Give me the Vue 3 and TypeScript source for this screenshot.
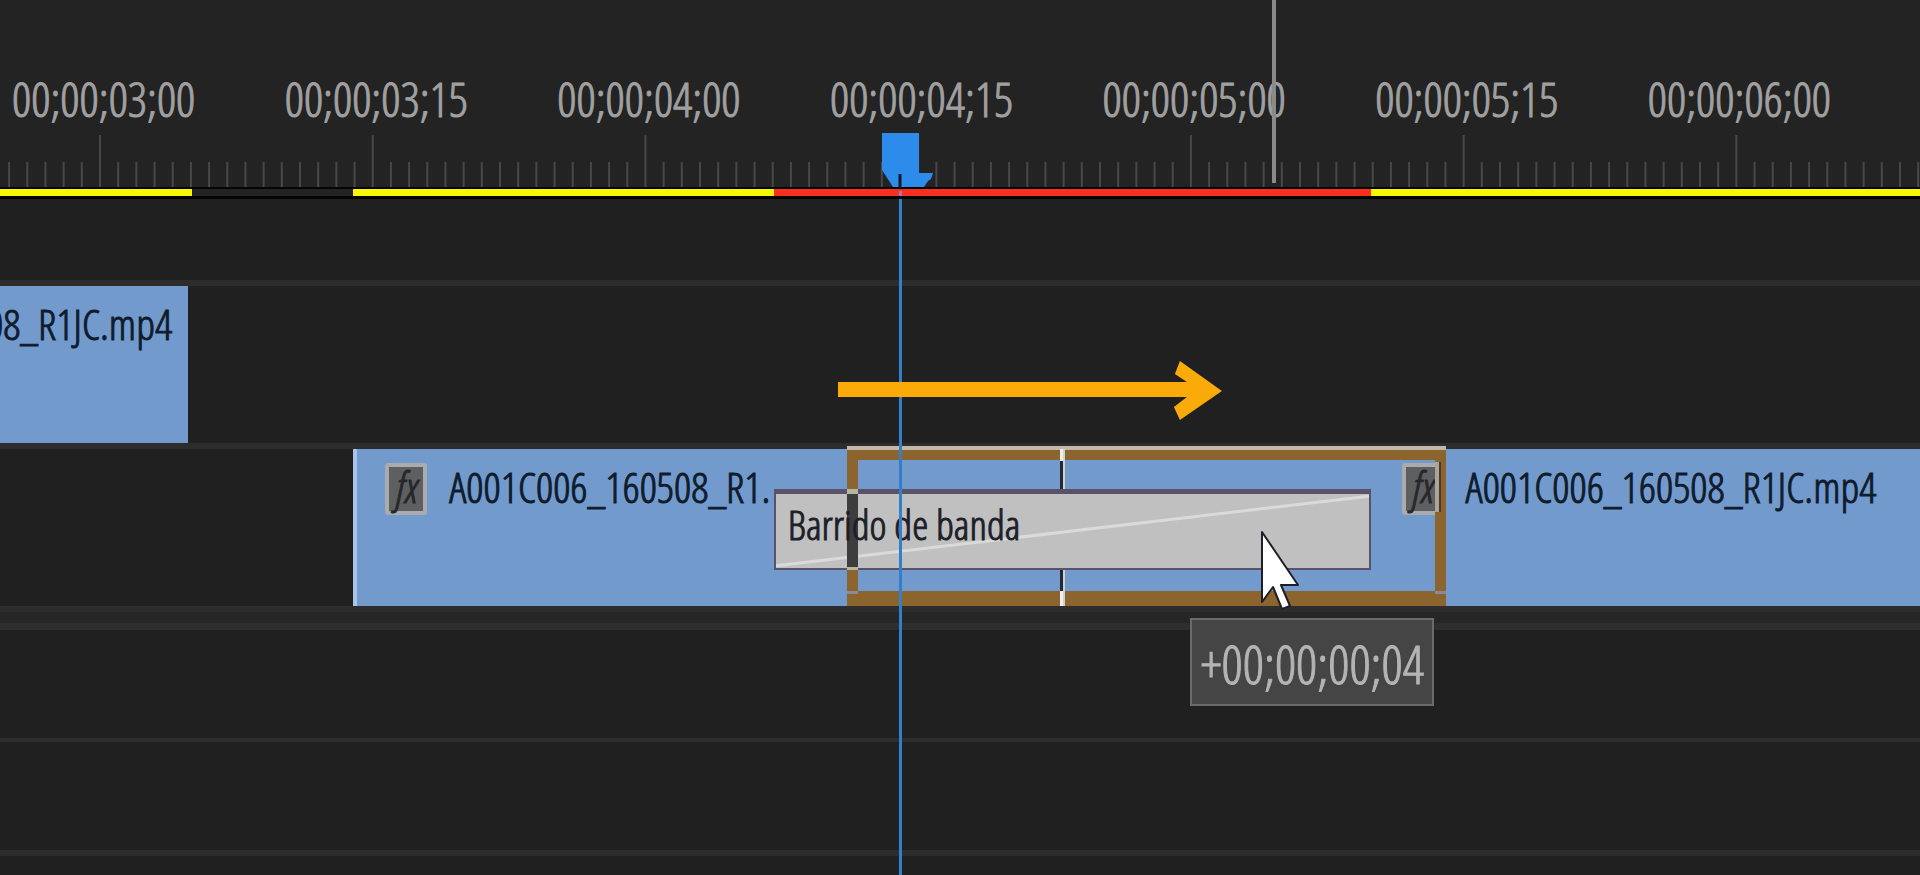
<script setup lang="ts">
interface Tick {
  frame: number
  major: boolean
}

const visibleFrames = 105.6
const firstMajor = 5.5
const labels: string[] = [
  '00;00;03;00',
  '00;00;03;15',
  '00;00;04;00',
  '00;00;04;15',
  '00;00;05;00',
  '00;00;05;15',
  '00;00;06;00',
]

const ticks: Tick[] = Array.from({ length: 106 }, (_, i) => ({
  frame: i - 5,
  major: (i - 5) % 15 === 0,
}))

const tickX = (frame: number): string => `${((frame + firstMajor) / visibleFrames) * 100}%`
</script>

<template>
  <main class="timeline">
    <header class="ruler">
      <div class="labels">
        <span v-for="label in labels" :key="label" class="label">{{ label }}</span>
      </div>
      <svg class="ticks" aria-hidden="true">
        <line
          v-for="tick in ticks"
          :key="tick.frame"
          :x1="tickX(tick.frame)"
          :x2="tickX(tick.frame)"
          :y1="tick.major ? 0 : 27"
          y2="52"
          stroke="#484848"
          stroke-width="2"
        />
      </svg>
      <div class="hover-line"></div>
    </header>

    <div class="render-bar">
      <span class="seg yellow lead"></span>
      <span class="seg empty"></span>
      <span class="seg yellow mid"></span>
      <span class="seg red"></span>
      <span class="seg yellow rest"></span>
    </div>

    <section class="track spare"></section>
    <section class="track upper">
      <article class="clip clip-a"><span class="name">08_R1JC.mp4</span></article>
      <svg class="arrow" viewBox="0 0 386 62" aria-hidden="true">
        <path d="M1 22H350L338 14L343 1L385 31L343 60L337 47L350 37H1Z" fill="#faab09" />
      </svg>
    </section>
    <section class="track lower">
      <article class="clip clip-b">
        <span class="fx">fx</span>
        <span class="name">A001C006_160508_R1.</span>
      </article>
      <article class="clip clip-c">
        <span class="fx">fx</span>
        <span class="name">A001C006_160508_R1JC.mp4</span>
      </article>
      <div class="frame">
        <i class="cut"></i>
        <i class="badge-edge"></i>
      </div>
      <div class="transition">
        <svg class="ramp" viewBox="0 0 100 100" preserveAspectRatio="none" aria-hidden="true">
          <line x1="0" y1="97" x2="100" y2="3" stroke="#dadada" stroke-width="3" vector-effect="non-scaling-stroke" />
        </svg>
        <i class="handle"></i>
        <span class="transition-name">Barrido de banda</span>
      </div>
    </section>
    <div class="divider"></div>
    <section class="track audio"></section>
    <section class="track audio second"></section>
    <section class="track tail"></section>

    <div class="playhead">
      <svg class="marker" viewBox="0 0 52 56" aria-hidden="true">
        <path d="M1 1H38V41H52L50 47L47 49L43 55H12L1 38Z" fill="#2d8ceb" />
        <path d="M19 42V56" stroke="#0c1824" stroke-width="3" />
      </svg>
    </div>
    <svg class="cursor" viewBox="0 0 42 84" aria-hidden="true">
      <path d="M2 2V72L13 57L22 79L30 76L21 55H38Z" fill="#fff" stroke="#1e1e2a" stroke-width="2" stroke-linejoin="round" />
    </svg>
    <output class="offset">+00;00;00;04</output>
  </main>
</template>

<style>
body {
  margin: 0;
  background: #202020;
}
</style>

<style scoped>
.timeline {
  position: relative;
  display: flex;
  flex-direction: column;
  min-height: 100vh;
  overflow: hidden;
  background: #202020;
  font-family: "Open Sans Condensed Light", "Liberation Sans Narrow", "Open Sans", sans-serif;
  font-weight: 400;
  font-size: 43px;
  line-height: 40px;
  white-space: nowrap;
  -webkit-text-stroke: 1px currentColor;
}
.ruler {
  position: relative;
  background: #232323;
  padding-top: 76px;
}
.labels {
  display: flex;
  width: 100%;
  margin-left: -1.7%;
  height: 59px;
}
.label {
  flex: 0 0 14.2%;
  text-align: center;
  color: #a0a0a0;
  font-size: 48px;
  line-height: 46px;
}
.ticks {
  display: block;
  width: 100%;
  height: 52px;
}
.hover-line {
  position: absolute;
  left: 66.25%;
  top: 0;
  width: 4px;
  height: 183px;
  background: #8a8a8a;
}
.render-bar {
  display: flex;
  height: 7px;
  padding: 2px 0 3px;
  background: #050505;
}
.yellow { background: #f7f708; }
.red { background: #f93020; }
.empty { background: #232323; }
.lead { width: 10%; }
.empty { width: 8.4%; }
.mid { width: 21.9%; }
.red { width: 31.1%; }
.rest { flex: 1; }
.track {
  position: relative;
  display: flex;
  border-bottom: 6px solid #2d2d2d;
}
.spare { height: 81px; }
.upper, .lower { height: 157px; }
.clip {
  display: flex;
  align-items: flex-start;
  box-sizing: border-box;
  overflow: hidden;
  background: #729acd;
  color: #101c2c;
}
.clip-a {
  width: 9.8%;
  justify-content: flex-end;
  padding: 14px 16px 0 0;
}
.clip-b {
  width: 42%;
  margin-left: 18.4%;
  border-left: 4px solid #a9c4e8;
  padding: 14px 0 0 28px;
}
.clip-c {
  flex: 1;
  padding: 14px 0 0 12.6%;
}
.clip .name { padding-top: 4px; }
.fx {
  box-sizing: border-box;
  width: 42px;
  height: 52px;
  margin-right: 22px;
  flex: none;
  border: 4px solid #a9abad;
  border-radius: 3px;
  background: #5e5f60;
  color: #26282b;
  font-style: italic;
  text-align: center;
}
.frame {
  position: absolute;
  left: 44.1%;
  width: 31.2%;
  top: -3px;
  bottom: 0;
  box-sizing: border-box;
  border: 11px solid #8b642e;
  border-top-width: 14px;
  border-bottom-width: 15px;
}
.frame::before {
  content: "";
  position: absolute;
  left: -11px;
  right: -11px;
  top: -14px;
  height: 4px;
  background: #c2b8aa;
}
.frame::after {
  content: "";
  position: absolute;
  left: -11px;
  right: -11px;
  bottom: -3px;
  height: 3px;
  border: solid #858c98;
  border-width: 0 11px;
}
.cut {
  position: absolute;
  left: 35%;
  top: -11px;
  bottom: -15px;
  width: 3px;
  border-right: 2px solid #d0d0d0;
  background: linear-gradient(#eee 12px, #26292e 12px, #26292e calc(100% - 15px), #eee calc(100% - 15px));
}
.badge-edge {
  position: absolute;
  right: -4px;
  top: 2px;
  width: 4px;
  height: 50px;
  background: #a9a49c;
  box-shadow: 2px 0 0 #4a3a2a;
}
.transition {
  position: absolute;
  left: 40.3%;
  width: 31.1%;
  top: 40px;
  height: 81px;
  box-sizing: border-box;
  border: 2px solid #595269;
  border-top-width: 5px;
  background: #c0c0c0;
}
.ramp {
  display: block;
  width: 100%;
  height: 100%;
}
.handle {
  position: absolute;
  left: 12%;
  top: -5px;
  bottom: -2px;
  width: 11px;
  box-sizing: border-box;
  border: solid #b4b7a2;
  border-width: 5px 0 3px;
  background: #3d3d3d;
}
.transition-name {
  position: absolute;
  left: 12px;
  top: 10px;
  color: #1c2028;
  font-size: 41px;
}
.arrow {
  position: absolute;
  z-index: 3;
  left: 43.6%;
  width: 20.1%;
  top: 74px;
}
.divider {
  height: 11px;
  border-bottom: 7px solid #2e2e2e;
  background: #262626;
}
.audio {
  height: 108px;
  border-bottom-width: 4px;
}
.second { border-bottom-width: 6px; }
.tail {
  flex: 1;
  border: 0;
}
.playhead {
  position: absolute;
  z-index: 2;
  left: 46.8%;
  top: 199px;
  bottom: 0;
  width: 3px;
  background: #347fc6;
}
.playhead::before {
  content: "";
  position: absolute;
  left: 0;
  top: -8px;
  width: 3px;
  height: 5px;
  background: #9a7fb0;
}
.marker {
  position: absolute;
  left: -18px;
  bottom: 100%;
  width: 52px;
  height: 56px;
  margin-bottom: 11px;
}
.cursor {
  position: absolute;
  z-index: 4;
  left: 65.6%;
  top: 530px;
  width: 42px;
  height: 84px;
}
.offset {
  position: absolute;
  z-index: 3;
  left: 62%;
  top: 618px;
  padding: 24px 8px 20px;
  border: 2px solid #6b6b6b;
  background: #454545;
  color: #b4b4b4;
  font-size: 53px;
}
</style>
